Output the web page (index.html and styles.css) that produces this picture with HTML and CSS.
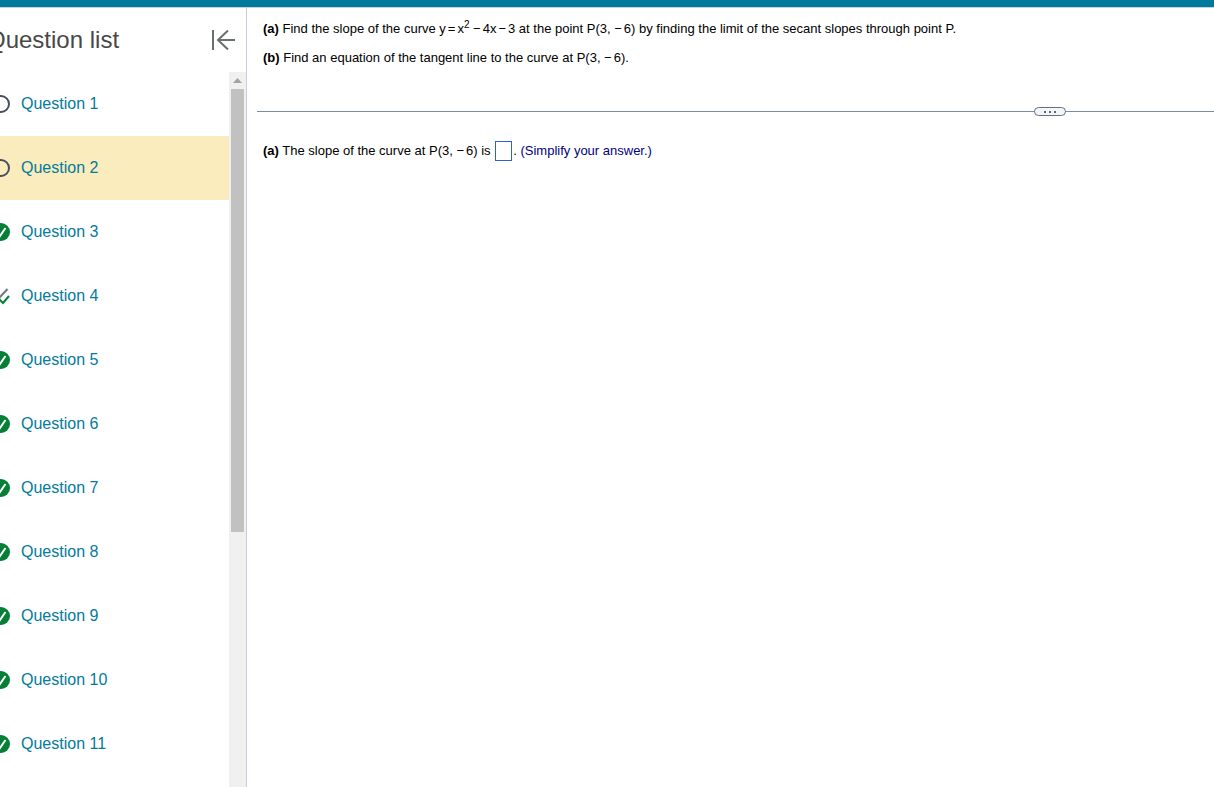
FILE: index.html
```html
<!DOCTYPE html>
<html lang="en">
<head>
    <meta charset="UTF-8">
    <meta name="viewport" content="width=device-width, initial-scale=1.0">
    <title>Question list</title>
    <link rel="stylesheet" href="styles.css">
</head>
<body>
    <!-- Shared status icons -->
    <svg class="icon-defs" width="0" height="0" aria-hidden="true">
        <symbol id="icon-open" viewBox="0 0 18 18">
            <circle cx="9" cy="9" r="8" fill="none" stroke="#47505c" stroke-width="2"/>
        </symbol>
        <symbol id="icon-done" viewBox="0 0 18 18">
            <circle cx="9" cy="9" r="9" fill="#058037"/>
            <path d="M4 9l4 4 5.500-8" fill="none" stroke="#fff" stroke-width="2"/>
        </symbol>
        <symbol id="icon-partial" viewBox="0 0 18 18">
            <path d="M2 7l5 4 8.500-9" fill="none" stroke="#777" stroke-width="2"/>
            <path d="M7 12l4 4 6-7" fill="none" stroke="#058037" stroke-width="2"/>
        </symbol>
    </svg>

    <header class="topbar"></header>

    <div class="layout">
        <aside class="sidebar">
            <div class="sidebar-header">
                <h1>Question list</h1>
                <button type="button" class="collapse-btn" aria-label="Collapse question list">
                    <svg width="24" height="22" viewBox="0 0 24 22" fill="none" stroke="#6a7070" stroke-width="2">
                        <path d="M2 1v20M24 11H7M17 1.500L7 11l10 9.500"/>
                    </svg>
                </button>
            </div>

            <div class="sidebar-body">
                <ul class="question-list">
                    <li><a href="#q1"><svg class="status"><use href="#icon-open"/></svg>Question 1</a></li>
                    <li class="current"><a href="#q2"><svg class="status"><use href="#icon-open"/></svg>Question 2</a></li>
                    <li><a href="#q3"><svg class="status"><use href="#icon-done"/></svg>Question 3</a></li>
                    <li><a href="#q4"><svg class="status"><use href="#icon-partial"/></svg>Question 4</a></li>
                    <li><a href="#q5"><svg class="status"><use href="#icon-done"/></svg>Question 5</a></li>
                    <li><a href="#q6"><svg class="status"><use href="#icon-done"/></svg>Question 6</a></li>
                    <li><a href="#q7"><svg class="status"><use href="#icon-done"/></svg>Question 7</a></li>
                    <li><a href="#q8"><svg class="status"><use href="#icon-done"/></svg>Question 8</a></li>
                    <li><a href="#q9"><svg class="status"><use href="#icon-done"/></svg>Question 9</a></li>
                    <li><a href="#q10"><svg class="status"><use href="#icon-done"/></svg>Question 10</a></li>
                    <li><a href="#q11"><svg class="status"><use href="#icon-done"/></svg>Question 11</a></li>
                </ul>
                <div class="scrollbar">
                    <svg class="scroll-up" width="17" height="17" viewBox="0 0 17 17">
                        <path d="M4 11h9L8.500 6z" fill="#a3a3a3"/>
                    </svg>
                    <div class="scroll-thumb"></div>
                </div>
            </div>
        </aside>

        <main class="content">
            <section class="problem">
                <p><b>(a)</b> Find the slope of the curve y<span class="eq">=</span>x<sup>2</sup> <span class="op">&minus;</span>4x<span class="op minus">&minus;</span>3 at the point P(3, <span class="op">&minus;</span>6) by finding the limit of the secant slopes through point P.</p>
                <p><b>(b)</b> Find an equation of the tangent line to the curve at P(3, <span class="op">&minus;</span>6).</p>
            </section>

            <div class="divider">
                <button type="button" class="divider-btn" aria-label="Resize panels">
                    <span></span><span></span><span></span>
                </button>
            </div>

            <section class="answer">
                <p><label for="slope"><b>(a)</b> The slope of the curve at P(3, <span class="op">&minus;</span>6) is</label> <input type="text" id="slope" class="answer-box">. <span class="hint">(Simplify your answer.)</span></p>
            </section>
        </main>
    </div>
</body>
</html>
```
FILE: styles.css
```css
* {
    box-sizing: border-box;
}

body {
    margin: 0;
    height: 100vh;
    display: flex;
    flex-direction: column;
    overflow: hidden;
    background-color: #fff;
    color: #000;
    font-family: "Liberation Sans", Arial, sans-serif;
    font-size: 13px;
}

button {
    padding: 0;
    cursor: pointer;
}

.icon-defs {
    position: absolute;
}

.topbar {
    flex: none;
    height: 8px;
    background-color: #007a9c;
    border-bottom: 1px solid #c9d0dc;
}

.layout {
    flex: 1;
    display: flex;
    min-height: 0;
}

/* Question list */
.sidebar {
    flex: none;
    width: 247px;
    display: flex;
    flex-direction: column;
    overflow: hidden;
    border-right: 1px solid #c7cdd9;
}

.sidebar-header {
    flex: none;
    height: 64px;
    display: flex;
    align-items: center;
    justify-content: space-between;
    margin-left: -13px;
    padding-right: 11px;
}

h1 {
    margin: 0;
    color: #484848;
    font-size: 24px;
    font-weight: normal;
}

.collapse-btn {
    display: flex;
    border: none;
    background: none;
}

.sidebar-body {
    flex: 1;
    display: flex;
    min-height: 0;
}

.question-list {
    flex: 1;
    margin: 0;
    padding: 0;
    overflow: hidden;
    list-style: none;
}

.question-list a {
    display: flex;
    align-items: center;
    gap: 11px;
    height: 64px;
    margin-left: -8px;
    color: #047a9c;
    font-size: 16px;
    text-decoration: none;
}

.question-list .current {
    background-color: #faecbd;
}

.status {
    width: 18px;
    height: 18px;
}

.scrollbar {
    flex: none;
    width: 17px;
    background-color: #f0f0f0;
}

.scroll-up {
    display: block;
}

.scroll-thumb {
    height: 62%;
    margin: 0 2px;
    background-color: #c1c1c1;
}

/* Problem and answer */
.content {
    flex: 1;
    min-width: 0;
    padding-left: 10px;
}

.content p {
    margin: 0;
    line-height: 29px;
}

.problem {
    padding: 6px 6px 39px;
}

sup {
    font-size: 10px;
    line-height: 0;
}

.eq {
    margin: 0 2px;
}

.op {
    margin-right: 2px;
}

.minus {
    margin-left: 2px;
}

.divider {
    display: flex;
    align-items: center;
    justify-content: flex-end;
    height: 1px;
    padding-right: 148px;
    background-color: #7f8ba5;
}

.divider-btn {
    flex: none;
    display: flex;
    align-items: center;
    justify-content: center;
    gap: 3px;
    width: 32px;
    height: 9px;
    border: 1px solid #5f7285;
    border-radius: 5px;
    background-color: #f3f5f7;
}

.divider-btn span {
    width: 2px;
    height: 2px;
    background-color: #5f6670;
}

.answer {
    padding: 24px 6px;
}

.answer-box {
    width: 17px;
    height: 20px;
    margin: 0 1px 2px;
    padding: 0 2px;
    border: 1px solid #2f62c9;
    background-color: #fff;
    font: inherit;
    vertical-align: middle;
}

.hint {
    color: #000080;
}
```
